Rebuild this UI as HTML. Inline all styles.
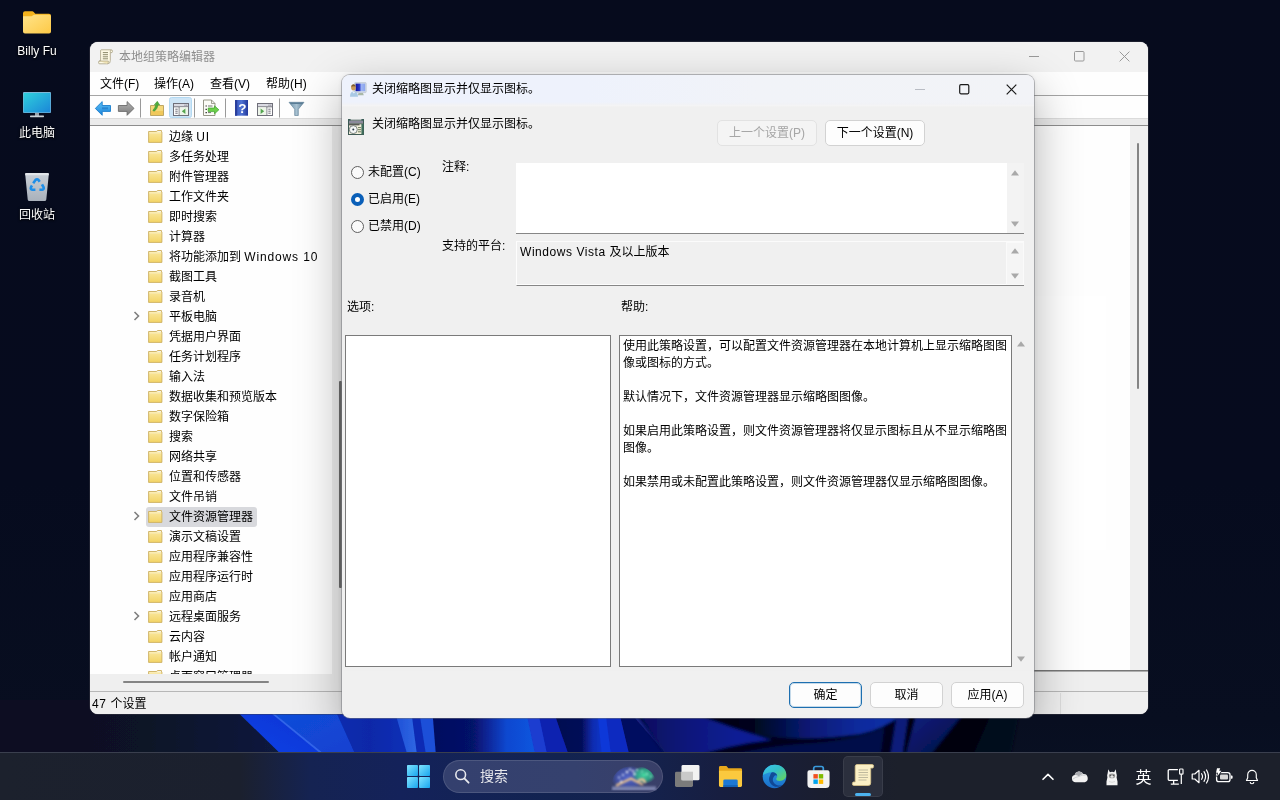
<!DOCTYPE html>
<html lang="zh-CN">
<head>
<meta charset="utf-8">
<title>本地组策略编辑器</title>
<style>
*{box-sizing:border-box;margin:0;padding:0}
html,body{width:1280px;height:800px;overflow:hidden}
body{position:relative;background:#060b18;font-family:"Liberation Sans","Noto Sans CJK SC",sans-serif;font-size:12px;color:#000;line-height:1;font-weight:400}
.abs{position:absolute}
#mmc,#dlg,.dicon,#help,.lbl{will-change:opacity;opacity:.999}
.g2{display:inline-block;will-change:opacity;opacity:.999}
.gs{will-change:opacity;opacity:.999;font-weight:400}
#wall{position:absolute;left:0;top:0;width:1280px;height:800px}
.dicon{position:absolute;font-weight:400;width:74px;text-align:center;color:#fff;font-size:12px;text-shadow:0 1px 2px rgba(0,0,0,.9),0 0 3px rgba(0,0,0,.7)}
/* main window */
#mmc{position:absolute;left:90px;top:42px;width:1058px;height:672px;background:#fff;border-radius:8px;overflow:hidden;box-shadow:0 0 0 1px rgba(60,60,70,.45)}
#mmc .title{position:absolute;left:0;top:0;width:100%;height:30px;background:#f3f3f3}
#mmc .title .t{position:absolute;left:29px;top:8px;font-size:12px;color:#8f8f8f;line-height:14px}
#mmc .menu{position:absolute;left:0;top:30px;width:100%;height:24px;background:#fff;border-bottom:1px solid #a6a6a6}
#mmc .menu span{position:absolute;top:5px;line-height:15px;font-size:12px;color:#000}
#mmc .tool{position:absolute;left:0;top:54px;width:100%;height:23px;background:#fff}
#mmc .band{position:absolute;left:0;top:76px;width:100%;height:8px;background:#ececec;border-top:1px solid #dcdcdc;border-bottom:1px solid #8e8e8e}
#mmc .pane{position:absolute;left:0;top:84px;width:100%;height:565px;background:#fff;overflow:hidden}
#mmc .status{position:absolute;left:0;top:649px;width:100%;height:23px;background:#f0f0f0;border-top:1px solid #b8b8b8}
.sep{position:absolute;top:57px;width:1px;height:19px;background:#a9a9a9}
.row{position:absolute;left:0;height:20px;font-size:12px;line-height:20px;color:#000;white-space:nowrap}
.row .fi{position:absolute;left:58px;top:4px}
.row .tx{position:absolute;left:79px;top:1px}
.row .ch{position:absolute;left:43px;top:5px}
/* dialog */
#dlg{position:absolute;left:342px;top:75px;width:692px;height:643px;background:#f0f0f0;border-radius:8px;overflow:hidden;box-shadow:0 0 0 1px rgba(120,122,128,.5)}
#dlg .cap{position:absolute;left:0;top:0;width:100%;height:32px;background:linear-gradient(180deg,rgba(240,240,240,0) 0,rgba(240,240,240,0) 27px,rgba(241,242,245,.8) 29px,#f4f4f5 30.500px,#f0f0f0 32px),linear-gradient(90deg,#eef2fc 0,#eef2fc 35%,#f1f3f8 60%,#f2f3f7 100%)}
#dlg .in{position:absolute;left:0;top:-1px;width:100%;height:644px}
.btn{position:absolute;height:26px;border:1px solid #d2d2d2;border-radius:5px;background:#fdfdfd;font-size:12px;line-height:24px;text-align:center;color:#000}
.radio{position:absolute;width:13px;height:13px;border-radius:50%;border:1px solid #5f5f5f;background:#fafafa}
.lbl{position:absolute;font-size:12px;line-height:14px;color:#000;white-space:nowrap}
/* taskbar */
#tb{position:absolute;left:0;top:752px;width:1280px;height:48px;background:linear-gradient(90deg,#1c212d 0,#1b202e 240px,#152352 310px,#14225a 400px,#122350 560px,#14224e 640px,#171e40 720px,#1a1e30 820px,#1c202b 900px,#1c202b 1280px);border-top:1px solid #3a3f4e}
</style>
</head>
<body>
<svg id="wall" viewBox="0 0 1280 800" width="1280" height="800">
  <defs>
    <linearGradient id="wbg" x1="0" y1="0" x2="0" y2="1"><stop offset="0" stop-color="#060b1d"/><stop offset=".6" stop-color="#060b1e"/><stop offset=".9" stop-color="#080e20"/><stop offset="1" stop-color="#091124"/></linearGradient>
    <linearGradient id="wp0" gradientUnits="userSpaceOnUse" x1="0" y1="0" x2="280" y2="0"><stop offset="0" stop-color="#080e20"/><stop offset=".5" stop-color="#091226"/><stop offset="1" stop-color="#0b1a3e"/></linearGradient>
    <linearGradient id="wp1" x1="0" y1="1" x2="1" y2="0"><stop offset="0" stop-color="#1244e8"/><stop offset=".5" stop-color="#0c3adc"/><stop offset="1" stop-color="#0a32cc"/></linearGradient>
    <linearGradient id="wp2" x1="0" y1="0" x2="1" y2="1"><stop offset="0" stop-color="#0e52dc"/><stop offset=".6" stop-color="#1246d4"/><stop offset="1" stop-color="#1840d0"/></linearGradient>
    <linearGradient id="wp3" x1="0" y1="0" x2="1" y2="0"><stop offset="0" stop-color="#0a2cb0"/><stop offset=".5" stop-color="#0828a8"/><stop offset="1" stop-color="#0a30b8"/></linearGradient>
    <linearGradient id="wp4" gradientUnits="userSpaceOnUse" x1="434" y1="0" x2="531" y2="0"><stop offset="0" stop-color="#040e60"/><stop offset=".4" stop-color="#061268"/><stop offset=".58" stop-color="#0a2aa0"/><stop offset=".75" stop-color="#0c48d0"/><stop offset="1" stop-color="#1054dc"/></linearGradient>
    <linearGradient id="wp5" gradientUnits="userSpaceOnUse" x1="556" y1="0" x2="602" y2="0"><stop offset="0" stop-color="#040a50"/><stop offset=".55" stop-color="#050c58"/><stop offset=".8" stop-color="#0c2cb0"/><stop offset="1" stop-color="#1034c8"/></linearGradient>
    <linearGradient id="wpa" x1="0" y1="0" x2="1" y2="0"><stop offset="0" stop-color="#1c4cd4"/><stop offset="1" stop-color="#3068e4"/></linearGradient>
    <linearGradient id="wp6" gradientUnits="userSpaceOnUse" x1="636" y1="0" x2="780" y2="0"><stop offset="0" stop-color="#060e5c"/><stop offset=".35" stop-color="#08167a"/><stop offset=".7" stop-color="#0a1e94"/><stop offset="1" stop-color="#0a1e90"/></linearGradient>
    <linearGradient id="wp7" gradientUnits="userSpaceOnUse" x1="690" y1="0" x2="900" y2="0"><stop offset="0" stop-color="#010310"/><stop offset=".3" stop-color="#02061c"/><stop offset=".55" stop-color="#071870"/><stop offset=".8" stop-color="#0c2a9c"/><stop offset="1" stop-color="#0e30a8"/></linearGradient>
    <linearGradient id="wp8" x1="0" y1="0" x2="1" y2="1"><stop offset="0" stop-color="#0a2088"/><stop offset=".6" stop-color="#061458"/><stop offset="1" stop-color="#01040c"/></linearGradient>
    <linearGradient id="wp9" x1="0" y1="0" x2="1" y2="0"><stop offset="0" stop-color="#06165f"/><stop offset="1" stop-color="#01030b"/></linearGradient>
    <filter id="wbl2" filterUnits="userSpaceOnUse" x="600" y="690" width="480" height="80"><feGaussianBlur stdDeviation="1.600"/></filter>
    <filter id="wbl" filterUnits="userSpaceOnUse" x="0" y="690" width="1280" height="80"><feGaussianBlur stdDeviation=".7"/></filter>
  </defs>
  <rect width="1280" height="800" fill="url(#wbg)"/>
  <g filter="url(#wbl)">
    <path d="M0 700H226.0 L285.6 758H0z" fill="url(#wp0)"/>
    <path d="M225.2 700 L284.8 758 L326.7 758 L255.8 700z" fill="url(#wp1)"/>
    <path d="M255.0 700 L325.9 758 L357.6 758 L331.6 700z" fill="url(#wp2)"/>
    <path d="M255.0 700 L325.9 758 L329.0 758 L257.4 700z" fill="#3c6ef0" opacity=".75"/>
    <path d="M330.8 700 L356.8 758 L409.1 758 L392.3 700z" fill="url(#wp3)"/>
    <path d="M391.5 700 L408.3 758 L418.2 758 L410.6 700z" fill="url(#wpa)"/>
    <path d="M409.8 700 L417.4 758 L427.3 758 L418.2 700z" fill="#0c2cb4"/>
    <path d="M417.4 700 L426.5 758 L436.9 758 L432.3 700z" fill="#1c50d8"/>
    <path d="M431.5 700 L436.1 758 L536.7 758 L524.5 700z" fill="url(#wp4)"/>
    <path d="M523.7 700 L535.9 758 L548.7 758 L536.5 700z" fill="#1a3cd0"/>
    <path d="M535.7 700 L547.9 758 L570.5 758 L550.6 700z" fill="#0c20b0"/>
    <path d="M549.8 700 L569.7 758 L603.0 758 L596.9 700z" fill="url(#wp5)"/>
    <path d="M596.1 700 L602.2 758 L612.2 758 L604.6 700z" fill="#1038d8"/>
    <path d="M603.8 700 L611.4 758 L630.8 758 L617.1 700z" fill="#0c2cc0"/>
    <path d="M616.3 700 L630.0 758 L670.6 758 L620.2 700z" fill="#060e60"/>
    <path d="M619.4 700 L669.8 758 L674.6 758 L624.2 700z" fill="#1a2c98" opacity=".8"/>
  </g>
  <g filter="url(#wbl2)">
    <path d="M627 700L667 758H1004V700z" fill="#02051a"/>
    <path d="M628 700L668 758H690Q730 744 772 740Q736 730 700 716L684 700z" fill="url(#wp6)"/>
    <path d="M684 700H902V714Q884 729 860 734Q806 742 758 735Q728 724 692 712z" fill="url(#wp7)"/>
    <path d="M720 758Q760 747 800 744Q850 742 884 728L880 758z" fill="#050f48"/>
    <path d="M897 714L909 712L902 758H890z" fill="#0a1e7a"/>
    <path d="M909 712L918 710L905 758H902z" fill="#01030b"/>
    <path d="M918 708H968L928 758H905z" fill="url(#wp8)"/>
    <path d="M968 708H994L972 758H928z" fill="#01030a"/>
    <path d="M994 708H1020L1010 758H972z" fill="#060c1c"/>
  </g>
  
  
</svg>

<!-- desktop icons -->
<svg class="abs" style="left:22px;top:10px" width="30" height="25" viewBox="0 0 30 25">
  <defs>
    <linearGradient id="fg1" x1="0" y1="0" x2="1" y2="1"><stop offset="0" stop-color="#ffe48a"/><stop offset="1" stop-color="#fdc946"/></linearGradient>
  </defs>
  <path d="M1 3.2a2 2 0 0 1 2-2h7.2a2 2 0 0 1 1.5.7l1.6 1.9H27a2 2 0 0 1 2 2V8H1z" fill="#f4b31c"/>
  <path d="M1 6.3h8.6l2.4-1.6h15a2 2 0 0 1 2 2V21.5a2 2 0 0 1-2 2H3a2 2 0 0 1-2-2z" fill="url(#fg1)"/>
</svg>
<div class="dicon" style="left:0;top:44px;line-height:15px">Billy Fu</div>

<svg class="abs" style="left:22px;top:91px" width="30" height="28" viewBox="0 0 30 28">
  <defs>
    <linearGradient id="pc1" x1="0" y1="0" x2="1" y2="1"><stop offset="0" stop-color="#2fd0dc"/><stop offset="1" stop-color="#1b86d8"/></linearGradient>
  </defs>
  <rect x="1" y="1" width="28" height="21" rx="1" fill="#7fb8d8"/>
  <rect x="1.6" y="2" width="26.8" height="19.4" fill="url(#pc1)"/>
  <rect x="13" y="22" width="4" height="3" fill="#9aa3ab"/>
  <rect x="8" y="24.6" width="14" height="1.6" rx=".6" fill="#c9d1d8"/>
</svg>
<div class="dicon" style="left:0;top:126px;line-height:15px">此电脑</div>

<svg class="abs" style="left:24px;top:172px" width="26" height="30" viewBox="0 0 26 30">
  <defs>
    <linearGradient id="rb1" x1="0" y1="0" x2="0" y2="1"><stop offset="0" stop-color="#c9d0d8"/><stop offset="1" stop-color="#a9b1bb"/></linearGradient>
  </defs>
  <path d="M1.2 2.2Q1 1 2.4 1H23.6Q25 1 24.8 2.2L22.3 27.4Q22.1 29 20.6 29H5.4Q3.9 29 3.7 27.4Z" fill="url(#rb1)"/>
  <path d="M1.2 2.2Q1 1 2.4 1H23.6Q25 1 24.8 2.2L24.7 3.2H1.3Z" fill="#e2e6ea"/>
  <g fill="none" stroke="#1f8fe8" stroke-width="2.6">
    <path d="M9.2 11.2l2.3-3.2q1.5-1.6 3 0l1.2 1.7"/>
    <path d="M18 12.4l1.6 2.9q.7 2-1.4 2.4h-2.8"/>
    <path d="M11.4 17.7H8.3q-2.2-.4-1.3-2.5l1-1.7"/>
  </g>
</svg>
<div class="dicon" style="left:0;top:208px;line-height:15px">回收站</div>

<div id="mmc">
<div class="title">
<svg class="abs" style="left:8px;top:7px" width="16" height="16" viewBox="0 0 16 16"><path d="M3.200 .8H12.800Q14.800 .8 14.500 2.600L14 3.600H12.300V11.500Q12.300 14.800 9.800 14.800H1.800Q.3 14.800 .6 13.300L1 12H2.600V1.800Q2.600 .8 3.200 .8z" fill="#fffbe6" stroke="#a9a184" stroke-width=".8" stroke-linejoin="round"/><path d="M1 12H10.400Q10.600 14 9.300 14.700" fill="#f1e4b4" stroke="#a9a184" stroke-width=".7"/><path d="M12.300 3.500V1.900Q12.400 1 13.300 1" fill="none" stroke="#a9a184" stroke-width=".7"/><path d="M4.800 3.600h5.200M4.800 5.700h5.200M4.800 7.800h5.200M4.800 9.800h5.200" stroke="#8e8a6c" stroke-width="1"/></svg>
<div class="t">本地组策略编辑器</div>
<svg class="abs" style="left:938px;top:8px" width="12" height="12" viewBox="0 0 12 12"><path d="M1 6.5h10" stroke="#9a9a9a" stroke-width="1"/></svg>
<svg class="abs" style="left:984px;top:9px" width="11" height="11" viewBox="0 0 11 11"><rect x=".5" y=".5" width="9.5" height="9.5" rx="1" fill="none" stroke="#9a9a9a" stroke-width="1"/></svg>
<svg class="abs" style="left:1029px;top:9px" width="11" height="11" viewBox="0 0 11 11"><path d="M.6.6l9.800 9.800M10.400.6L.6 10.400" stroke="#9a9a9a" stroke-width="1"/></svg>
</div>
<div class="menu"><span style="left:10px">文件(F)</span><span style="left:64px">操作(A)</span><span style="left:120px">查看(V)</span><span style="left:176px">帮助(H)</span></div>
<div class="tool"></div>
<svg class="abs" style="left:0;top:54px" width="240" height="24" viewBox="90 96 240 24">
  <defs>
    <linearGradient id="tb1" x1="0" y1="0" x2="0" y2="1"><stop offset="0" stop-color="#5cc0f6"/><stop offset="1" stop-color="#1f86dc"/></linearGradient>
    <linearGradient id="tb2" x1="0" y1="0" x2="0" y2="1"><stop offset="0" stop-color="#b3b3b3"/><stop offset="1" stop-color="#7c7c7c"/></linearGradient>
    <linearGradient id="tb3" x1="0" y1="0" x2="1" y2="0"><stop offset="0" stop-color="#3a58c0"/><stop offset=".5" stop-color="#4f73d4"/><stop offset="1" stop-color="#22389c"/></linearGradient>
    <linearGradient id="tb4" x1="0" y1="0" x2="1" y2="0"><stop offset="0" stop-color="#6f93ab"/><stop offset=".5" stop-color="#a9c3d3"/><stop offset="1" stop-color="#5f8098"/></linearGradient>
  </defs>
  <!-- back -->
  <path d="M95.300 108.400L102.200 101.600V105.500H110.500V111.400H102.200V115.300z" fill="url(#tb1)" stroke="#1c7fce" stroke-width=".9" stroke-linejoin="round"/>
  <rect x="102" y="107.300" width="6" height="2" fill="#1a6fc0" opacity=".55"/>
  <!-- forward -->
  <path d="M134 108.400L127.100 101.600V105.500H118.400V111.400H127.100V115.300z" fill="url(#tb2)" stroke="#6c6c6c" stroke-width=".9" stroke-linejoin="round"/>
  <rect x="140" y="98.500" width="1" height="19" fill="#9a9a9a"/>
  <!-- up folder -->
  <path d="M150.500 105.500H163.500V115.500H150.500z" fill="#f6d97c" stroke="#b9a05a" stroke-width=".9"/>
  <path d="M151 111h12v4h-12z" fill="#f1c95c"/>
  <path d="M152.800 110.500Q155 108 156 104.500L154.300 104.800 157.300 101.300 159.700 105 158 104.700Q157.500 109 154.300 111.200z" fill="#4fae3a" stroke="#3b8f2c" stroke-width=".5"/>
  <!-- selected show/hide tree -->
  <rect x="169.500" y="97.500" width="22" height="20" rx="2" fill="#cfe6f7" stroke="#b4daf3" stroke-width="1"/>
  <rect x="173.500" y="103.500" width="15" height="12" fill="#fff" stroke="#70707a" stroke-width="1"/>
  <rect x="174" y="104" width="14" height="2.300" fill="#dcdce4"/>
  <path d="M174 106.800H188" stroke="#70707a" stroke-width="1"/>
  <path d="M184.500 105.200h1M186.300 105.200h1" stroke="#70707a" stroke-width="1"/>
  <path d="M179.200 107V115" stroke="#70707a" stroke-width="1"/>
  <path d="M175.300 109.200h2.400M175.300 111.200h2.400M175.300 113.200h2.400" stroke="#70707a" stroke-width="1"/>
  <rect x="179.700" y="107.300" width="8.300" height="7.700" fill="#eef6ea"/>
  <path d="M185.400 108.600V114l-3.600-2.700z" fill="#55a650"/>
  <rect x="194" y="98.500" width="1" height="19" fill="#9a9a9a"/>
  <!-- export list -->
  <path d="M203.500 100h8l3.500 3.500V115.500h-11.500z" fill="#fdfdf8" stroke="#8c8c7c" stroke-width=".9"/>
  <path d="M211.500 100v3.500h3.500" fill="none" stroke="#8c8c7c" stroke-width=".8"/>
  <path d="M205.500 106h1.400M205.500 109.300h1.400M205.500 112.600h1.400" stroke="#333" stroke-width="1.200"/>
  <path d="M208 106h4.500M208 112.600h3" stroke="#777" stroke-width="1"/>
  <path d="M208.200 108h6.300V105.800L218.900 109.800 214.500 113.800V111.600H208.200z" fill="#6cd04a" stroke="#3fa42c" stroke-width=".7" stroke-linejoin="round"/>
  <rect x="225" y="98.500" width="1" height="19" fill="#9a9a9a"/>
  <!-- help -->
  <rect x="235" y="100" width="13" height="15.700" fill="url(#tb3)"/>
  <rect x="235" y="100" width="2.200" height="15.700" fill="#2a3f9c"/>
  <text x="242.300" y="113.300" text-anchor="middle" font-family="Liberation Sans, sans-serif" font-weight="bold" font-size="13.500" fill="#fff">?</text>
  <!-- show/hide action -->
  <rect x="257.500" y="103.500" width="15" height="12" fill="#fff" stroke="#70707a" stroke-width="1"/>
  <rect x="258" y="104" width="14" height="2.300" fill="#dcdce4"/>
  <path d="M258 106.800H272" stroke="#70707a" stroke-width="1"/>
  <path d="M268.500 105.200h1M270.300 105.200h1" stroke="#70707a" stroke-width="1"/>
  <path d="M266.800 107V115" stroke="#70707a" stroke-width="1"/>
  <rect x="258" y="107.300" width="8.300" height="7.700" fill="#eef6ea"/>
  <path d="M260.600 108.600V114l3.600-2.700z" fill="#55a650"/>
  <path d="M268.300 109.200h2.400M268.300 111.200h2.400M268.300 113.200h2.400" stroke="#70707a" stroke-width="1"/>
  <rect x="279" y="98.500" width="1" height="19" fill="#9a9a9a"/>
  <!-- filter -->
  <path d="M289 102.300H304L298.300 109.200V115.500H294.700V109.200z" fill="url(#tb4)" stroke="#6a8ba0" stroke-width=".7" stroke-linejoin="round"/>
  <path d="M289.500 102.600H303.500L302.500 103.900H290.500z" fill="#5c7f98"/>
</svg>

<div class="band"></div>
<div class="pane">
<div class="row" style="top:0px"><svg class="fi" width="15" height="14" viewBox="0 0 15 14"><defs><linearGradient id="fo" x1="0" y1="0" x2="0" y2="1"><stop offset="0" stop-color="#fbeaa6"/><stop offset="1" stop-color="#f4d566"/></linearGradient></defs><path d="M.6 1.500H8.400L9.600 .5H13.400V2H13.900V12.400H.6z" fill="url(#fo)" stroke="#cdb062" stroke-width=".9" stroke-linejoin="round"/><path d="M9 1.900L9.900 1H13V1.900z" fill="#f6f3e6"/><path d="M1.200 2.900H13.300" stroke="#fdf5d2" stroke-width=".8"/></svg><span class="tx">边缘 <span style="letter-spacing:.8px">UI</span></span></div>
<div class="row" style="top:20px"><svg class="fi" width="15" height="14" viewBox="0 0 15 14"><defs><linearGradient id="fo" x1="0" y1="0" x2="0" y2="1"><stop offset="0" stop-color="#fbeaa6"/><stop offset="1" stop-color="#f4d566"/></linearGradient></defs><path d="M.6 1.500H8.400L9.600 .5H13.400V2H13.900V12.400H.6z" fill="url(#fo)" stroke="#cdb062" stroke-width=".9" stroke-linejoin="round"/><path d="M9 1.900L9.900 1H13V1.900z" fill="#f6f3e6"/><path d="M1.200 2.900H13.300" stroke="#fdf5d2" stroke-width=".8"/></svg><span class="tx">多任务处理</span></div>
<div class="row" style="top:40px"><svg class="fi" width="15" height="14" viewBox="0 0 15 14"><defs><linearGradient id="fo" x1="0" y1="0" x2="0" y2="1"><stop offset="0" stop-color="#fbeaa6"/><stop offset="1" stop-color="#f4d566"/></linearGradient></defs><path d="M.6 1.500H8.400L9.600 .5H13.400V2H13.900V12.400H.6z" fill="url(#fo)" stroke="#cdb062" stroke-width=".9" stroke-linejoin="round"/><path d="M9 1.900L9.900 1H13V1.900z" fill="#f6f3e6"/><path d="M1.200 2.900H13.300" stroke="#fdf5d2" stroke-width=".8"/></svg><span class="tx">附件管理器</span></div>
<div class="row" style="top:60px"><svg class="fi" width="15" height="14" viewBox="0 0 15 14"><defs><linearGradient id="fo" x1="0" y1="0" x2="0" y2="1"><stop offset="0" stop-color="#fbeaa6"/><stop offset="1" stop-color="#f4d566"/></linearGradient></defs><path d="M.6 1.500H8.400L9.600 .5H13.400V2H13.900V12.400H.6z" fill="url(#fo)" stroke="#cdb062" stroke-width=".9" stroke-linejoin="round"/><path d="M9 1.900L9.900 1H13V1.900z" fill="#f6f3e6"/><path d="M1.200 2.900H13.300" stroke="#fdf5d2" stroke-width=".8"/></svg><span class="tx">工作文件夹</span></div>
<div class="row" style="top:80px"><svg class="fi" width="15" height="14" viewBox="0 0 15 14"><defs><linearGradient id="fo" x1="0" y1="0" x2="0" y2="1"><stop offset="0" stop-color="#fbeaa6"/><stop offset="1" stop-color="#f4d566"/></linearGradient></defs><path d="M.6 1.500H8.400L9.600 .5H13.400V2H13.900V12.400H.6z" fill="url(#fo)" stroke="#cdb062" stroke-width=".9" stroke-linejoin="round"/><path d="M9 1.900L9.900 1H13V1.900z" fill="#f6f3e6"/><path d="M1.200 2.900H13.300" stroke="#fdf5d2" stroke-width=".8"/></svg><span class="tx">即时搜索</span></div>
<div class="row" style="top:100px"><svg class="fi" width="15" height="14" viewBox="0 0 15 14"><defs><linearGradient id="fo" x1="0" y1="0" x2="0" y2="1"><stop offset="0" stop-color="#fbeaa6"/><stop offset="1" stop-color="#f4d566"/></linearGradient></defs><path d="M.6 1.500H8.400L9.600 .5H13.400V2H13.900V12.400H.6z" fill="url(#fo)" stroke="#cdb062" stroke-width=".9" stroke-linejoin="round"/><path d="M9 1.900L9.900 1H13V1.900z" fill="#f6f3e6"/><path d="M1.200 2.900H13.300" stroke="#fdf5d2" stroke-width=".8"/></svg><span class="tx">计算器</span></div>
<div class="row" style="top:120px"><svg class="fi" width="15" height="14" viewBox="0 0 15 14"><defs><linearGradient id="fo" x1="0" y1="0" x2="0" y2="1"><stop offset="0" stop-color="#fbeaa6"/><stop offset="1" stop-color="#f4d566"/></linearGradient></defs><path d="M.6 1.500H8.400L9.600 .5H13.400V2H13.900V12.400H.6z" fill="url(#fo)" stroke="#cdb062" stroke-width=".9" stroke-linejoin="round"/><path d="M9 1.900L9.900 1H13V1.900z" fill="#f6f3e6"/><path d="M1.200 2.900H13.300" stroke="#fdf5d2" stroke-width=".8"/></svg><span class="tx">将功能添加到 <span style="letter-spacing:.85px">Windows 10</span></span></div>
<div class="row" style="top:140px"><svg class="fi" width="15" height="14" viewBox="0 0 15 14"><defs><linearGradient id="fo" x1="0" y1="0" x2="0" y2="1"><stop offset="0" stop-color="#fbeaa6"/><stop offset="1" stop-color="#f4d566"/></linearGradient></defs><path d="M.6 1.500H8.400L9.600 .5H13.400V2H13.900V12.400H.6z" fill="url(#fo)" stroke="#cdb062" stroke-width=".9" stroke-linejoin="round"/><path d="M9 1.900L9.900 1H13V1.900z" fill="#f6f3e6"/><path d="M1.200 2.900H13.300" stroke="#fdf5d2" stroke-width=".8"/></svg><span class="tx">截图工具</span></div>
<div class="row" style="top:160px"><svg class="fi" width="15" height="14" viewBox="0 0 15 14"><defs><linearGradient id="fo" x1="0" y1="0" x2="0" y2="1"><stop offset="0" stop-color="#fbeaa6"/><stop offset="1" stop-color="#f4d566"/></linearGradient></defs><path d="M.6 1.500H8.400L9.600 .5H13.400V2H13.900V12.400H.6z" fill="url(#fo)" stroke="#cdb062" stroke-width=".9" stroke-linejoin="round"/><path d="M9 1.900L9.900 1H13V1.900z" fill="#f6f3e6"/><path d="M1.200 2.900H13.300" stroke="#fdf5d2" stroke-width=".8"/></svg><span class="tx">录音机</span></div>
<div class="row" style="top:180px"><svg class="ch" width="8" height="10" viewBox="0 0 8 10"><path d="M1.500 1l4 4-4 4" fill="none" stroke="#808080" stroke-width="1.600"/></svg><svg class="fi" width="15" height="14" viewBox="0 0 15 14"><defs><linearGradient id="fo" x1="0" y1="0" x2="0" y2="1"><stop offset="0" stop-color="#fbeaa6"/><stop offset="1" stop-color="#f4d566"/></linearGradient></defs><path d="M.6 1.500H8.400L9.600 .5H13.400V2H13.900V12.400H.6z" fill="url(#fo)" stroke="#cdb062" stroke-width=".9" stroke-linejoin="round"/><path d="M9 1.900L9.900 1H13V1.900z" fill="#f6f3e6"/><path d="M1.200 2.900H13.300" stroke="#fdf5d2" stroke-width=".8"/></svg><span class="tx">平板电脑</span></div>
<div class="row" style="top:200px"><svg class="fi" width="15" height="14" viewBox="0 0 15 14"><defs><linearGradient id="fo" x1="0" y1="0" x2="0" y2="1"><stop offset="0" stop-color="#fbeaa6"/><stop offset="1" stop-color="#f4d566"/></linearGradient></defs><path d="M.6 1.500H8.400L9.600 .5H13.400V2H13.900V12.400H.6z" fill="url(#fo)" stroke="#cdb062" stroke-width=".9" stroke-linejoin="round"/><path d="M9 1.900L9.900 1H13V1.900z" fill="#f6f3e6"/><path d="M1.200 2.900H13.300" stroke="#fdf5d2" stroke-width=".8"/></svg><span class="tx">凭据用户界面</span></div>
<div class="row" style="top:220px"><svg class="fi" width="15" height="14" viewBox="0 0 15 14"><defs><linearGradient id="fo" x1="0" y1="0" x2="0" y2="1"><stop offset="0" stop-color="#fbeaa6"/><stop offset="1" stop-color="#f4d566"/></linearGradient></defs><path d="M.6 1.500H8.400L9.600 .5H13.400V2H13.900V12.400H.6z" fill="url(#fo)" stroke="#cdb062" stroke-width=".9" stroke-linejoin="round"/><path d="M9 1.900L9.900 1H13V1.900z" fill="#f6f3e6"/><path d="M1.200 2.900H13.300" stroke="#fdf5d2" stroke-width=".8"/></svg><span class="tx">任务计划程序</span></div>
<div class="row" style="top:240px"><svg class="fi" width="15" height="14" viewBox="0 0 15 14"><defs><linearGradient id="fo" x1="0" y1="0" x2="0" y2="1"><stop offset="0" stop-color="#fbeaa6"/><stop offset="1" stop-color="#f4d566"/></linearGradient></defs><path d="M.6 1.500H8.400L9.600 .5H13.400V2H13.900V12.400H.6z" fill="url(#fo)" stroke="#cdb062" stroke-width=".9" stroke-linejoin="round"/><path d="M9 1.900L9.900 1H13V1.900z" fill="#f6f3e6"/><path d="M1.200 2.900H13.300" stroke="#fdf5d2" stroke-width=".8"/></svg><span class="tx">输入法</span></div>
<div class="row" style="top:260px"><svg class="fi" width="15" height="14" viewBox="0 0 15 14"><defs><linearGradient id="fo" x1="0" y1="0" x2="0" y2="1"><stop offset="0" stop-color="#fbeaa6"/><stop offset="1" stop-color="#f4d566"/></linearGradient></defs><path d="M.6 1.500H8.400L9.600 .5H13.400V2H13.900V12.400H.6z" fill="url(#fo)" stroke="#cdb062" stroke-width=".9" stroke-linejoin="round"/><path d="M9 1.900L9.900 1H13V1.900z" fill="#f6f3e6"/><path d="M1.200 2.900H13.300" stroke="#fdf5d2" stroke-width=".8"/></svg><span class="tx">数据收集和预览版本</span></div>
<div class="row" style="top:280px"><svg class="fi" width="15" height="14" viewBox="0 0 15 14"><defs><linearGradient id="fo" x1="0" y1="0" x2="0" y2="1"><stop offset="0" stop-color="#fbeaa6"/><stop offset="1" stop-color="#f4d566"/></linearGradient></defs><path d="M.6 1.500H8.400L9.600 .5H13.400V2H13.900V12.400H.6z" fill="url(#fo)" stroke="#cdb062" stroke-width=".9" stroke-linejoin="round"/><path d="M9 1.900L9.900 1H13V1.900z" fill="#f6f3e6"/><path d="M1.200 2.900H13.300" stroke="#fdf5d2" stroke-width=".8"/></svg><span class="tx">数字保险箱</span></div>
<div class="row" style="top:300px"><svg class="fi" width="15" height="14" viewBox="0 0 15 14"><defs><linearGradient id="fo" x1="0" y1="0" x2="0" y2="1"><stop offset="0" stop-color="#fbeaa6"/><stop offset="1" stop-color="#f4d566"/></linearGradient></defs><path d="M.6 1.500H8.400L9.600 .5H13.400V2H13.900V12.400H.6z" fill="url(#fo)" stroke="#cdb062" stroke-width=".9" stroke-linejoin="round"/><path d="M9 1.900L9.900 1H13V1.900z" fill="#f6f3e6"/><path d="M1.200 2.900H13.300" stroke="#fdf5d2" stroke-width=".8"/></svg><span class="tx">搜索</span></div>
<div class="row" style="top:320px"><svg class="fi" width="15" height="14" viewBox="0 0 15 14"><defs><linearGradient id="fo" x1="0" y1="0" x2="0" y2="1"><stop offset="0" stop-color="#fbeaa6"/><stop offset="1" stop-color="#f4d566"/></linearGradient></defs><path d="M.6 1.500H8.400L9.600 .5H13.400V2H13.900V12.400H.6z" fill="url(#fo)" stroke="#cdb062" stroke-width=".9" stroke-linejoin="round"/><path d="M9 1.900L9.900 1H13V1.900z" fill="#f6f3e6"/><path d="M1.200 2.900H13.300" stroke="#fdf5d2" stroke-width=".8"/></svg><span class="tx">网络共享</span></div>
<div class="row" style="top:340px"><svg class="fi" width="15" height="14" viewBox="0 0 15 14"><defs><linearGradient id="fo" x1="0" y1="0" x2="0" y2="1"><stop offset="0" stop-color="#fbeaa6"/><stop offset="1" stop-color="#f4d566"/></linearGradient></defs><path d="M.6 1.500H8.400L9.600 .5H13.400V2H13.900V12.400H.6z" fill="url(#fo)" stroke="#cdb062" stroke-width=".9" stroke-linejoin="round"/><path d="M9 1.900L9.900 1H13V1.900z" fill="#f6f3e6"/><path d="M1.200 2.900H13.300" stroke="#fdf5d2" stroke-width=".8"/></svg><span class="tx">位置和传感器</span></div>
<div class="row" style="top:360px"><svg class="fi" width="15" height="14" viewBox="0 0 15 14"><defs><linearGradient id="fo" x1="0" y1="0" x2="0" y2="1"><stop offset="0" stop-color="#fbeaa6"/><stop offset="1" stop-color="#f4d566"/></linearGradient></defs><path d="M.6 1.500H8.400L9.600 .5H13.400V2H13.900V12.400H.6z" fill="url(#fo)" stroke="#cdb062" stroke-width=".9" stroke-linejoin="round"/><path d="M9 1.900L9.900 1H13V1.900z" fill="#f6f3e6"/><path d="M1.200 2.900H13.300" stroke="#fdf5d2" stroke-width=".8"/></svg><span class="tx">文件吊销</span></div>
<div class="row" style="top:380px"><div class="abs" style="left:56px;top:1px;width:111px;height:20px;background:#d9dade;border-radius:3px"></div><svg class="ch" width="8" height="10" viewBox="0 0 8 10"><path d="M1.500 1l4 4-4 4" fill="none" stroke="#808080" stroke-width="1.600"/></svg><svg class="fi" width="15" height="14" viewBox="0 0 15 14"><defs><linearGradient id="fo" x1="0" y1="0" x2="0" y2="1"><stop offset="0" stop-color="#fbeaa6"/><stop offset="1" stop-color="#f4d566"/></linearGradient></defs><path d="M.6 1.500H8.400L9.600 .5H13.400V2H13.900V12.400H.6z" fill="url(#fo)" stroke="#cdb062" stroke-width=".9" stroke-linejoin="round"/><path d="M9 1.900L9.900 1H13V1.900z" fill="#f6f3e6"/><path d="M1.200 2.900H13.300" stroke="#fdf5d2" stroke-width=".8"/></svg><span class="tx">文件资源管理器</span></div>
<div class="row" style="top:400px"><svg class="fi" width="15" height="14" viewBox="0 0 15 14"><defs><linearGradient id="fo" x1="0" y1="0" x2="0" y2="1"><stop offset="0" stop-color="#fbeaa6"/><stop offset="1" stop-color="#f4d566"/></linearGradient></defs><path d="M.6 1.500H8.400L9.600 .5H13.400V2H13.900V12.400H.6z" fill="url(#fo)" stroke="#cdb062" stroke-width=".9" stroke-linejoin="round"/><path d="M9 1.900L9.900 1H13V1.900z" fill="#f6f3e6"/><path d="M1.200 2.900H13.300" stroke="#fdf5d2" stroke-width=".8"/></svg><span class="tx">演示文稿设置</span></div>
<div class="row" style="top:420px"><svg class="fi" width="15" height="14" viewBox="0 0 15 14"><defs><linearGradient id="fo" x1="0" y1="0" x2="0" y2="1"><stop offset="0" stop-color="#fbeaa6"/><stop offset="1" stop-color="#f4d566"/></linearGradient></defs><path d="M.6 1.500H8.400L9.600 .5H13.400V2H13.900V12.400H.6z" fill="url(#fo)" stroke="#cdb062" stroke-width=".9" stroke-linejoin="round"/><path d="M9 1.900L9.900 1H13V1.900z" fill="#f6f3e6"/><path d="M1.200 2.900H13.300" stroke="#fdf5d2" stroke-width=".8"/></svg><span class="tx">应用程序兼容性</span></div>
<div class="row" style="top:440px"><svg class="fi" width="15" height="14" viewBox="0 0 15 14"><defs><linearGradient id="fo" x1="0" y1="0" x2="0" y2="1"><stop offset="0" stop-color="#fbeaa6"/><stop offset="1" stop-color="#f4d566"/></linearGradient></defs><path d="M.6 1.500H8.400L9.600 .5H13.400V2H13.900V12.400H.6z" fill="url(#fo)" stroke="#cdb062" stroke-width=".9" stroke-linejoin="round"/><path d="M9 1.900L9.900 1H13V1.900z" fill="#f6f3e6"/><path d="M1.200 2.900H13.300" stroke="#fdf5d2" stroke-width=".8"/></svg><span class="tx">应用程序运行时</span></div>
<div class="row" style="top:460px"><svg class="fi" width="15" height="14" viewBox="0 0 15 14"><defs><linearGradient id="fo" x1="0" y1="0" x2="0" y2="1"><stop offset="0" stop-color="#fbeaa6"/><stop offset="1" stop-color="#f4d566"/></linearGradient></defs><path d="M.6 1.500H8.400L9.600 .5H13.400V2H13.900V12.400H.6z" fill="url(#fo)" stroke="#cdb062" stroke-width=".9" stroke-linejoin="round"/><path d="M9 1.900L9.900 1H13V1.900z" fill="#f6f3e6"/><path d="M1.200 2.900H13.300" stroke="#fdf5d2" stroke-width=".8"/></svg><span class="tx">应用商店</span></div>
<div class="row" style="top:480px"><svg class="ch" width="8" height="10" viewBox="0 0 8 10"><path d="M1.500 1l4 4-4 4" fill="none" stroke="#808080" stroke-width="1.600"/></svg><svg class="fi" width="15" height="14" viewBox="0 0 15 14"><defs><linearGradient id="fo" x1="0" y1="0" x2="0" y2="1"><stop offset="0" stop-color="#fbeaa6"/><stop offset="1" stop-color="#f4d566"/></linearGradient></defs><path d="M.6 1.500H8.400L9.600 .5H13.400V2H13.900V12.400H.6z" fill="url(#fo)" stroke="#cdb062" stroke-width=".9" stroke-linejoin="round"/><path d="M9 1.900L9.900 1H13V1.900z" fill="#f6f3e6"/><path d="M1.200 2.900H13.300" stroke="#fdf5d2" stroke-width=".8"/></svg><span class="tx">远程桌面服务</span></div>
<div class="row" style="top:500px"><svg class="fi" width="15" height="14" viewBox="0 0 15 14"><defs><linearGradient id="fo" x1="0" y1="0" x2="0" y2="1"><stop offset="0" stop-color="#fbeaa6"/><stop offset="1" stop-color="#f4d566"/></linearGradient></defs><path d="M.6 1.500H8.400L9.600 .5H13.400V2H13.900V12.400H.6z" fill="url(#fo)" stroke="#cdb062" stroke-width=".9" stroke-linejoin="round"/><path d="M9 1.900L9.900 1H13V1.900z" fill="#f6f3e6"/><path d="M1.200 2.900H13.300" stroke="#fdf5d2" stroke-width=".8"/></svg><span class="tx">云内容</span></div>
<div class="row" style="top:520px"><svg class="fi" width="15" height="14" viewBox="0 0 15 14"><defs><linearGradient id="fo" x1="0" y1="0" x2="0" y2="1"><stop offset="0" stop-color="#fbeaa6"/><stop offset="1" stop-color="#f4d566"/></linearGradient></defs><path d="M.6 1.500H8.400L9.600 .5H13.400V2H13.900V12.400H.6z" fill="url(#fo)" stroke="#cdb062" stroke-width=".9" stroke-linejoin="round"/><path d="M9 1.900L9.900 1H13V1.900z" fill="#f6f3e6"/><path d="M1.200 2.900H13.300" stroke="#fdf5d2" stroke-width=".8"/></svg><span class="tx">帐户通知</span></div>
<div class="row" style="top:540px"><svg class="fi" width="15" height="14" viewBox="0 0 15 14"><defs><linearGradient id="fo" x1="0" y1="0" x2="0" y2="1"><stop offset="0" stop-color="#fbeaa6"/><stop offset="1" stop-color="#f4d566"/></linearGradient></defs><path d="M.6 1.500H8.400L9.600 .5H13.400V2H13.900V12.400H.6z" fill="url(#fo)" stroke="#cdb062" stroke-width=".9" stroke-linejoin="round"/><path d="M9 1.900L9.900 1H13V1.900z" fill="#f6f3e6"/><path d="M1.200 2.900H13.300" stroke="#fdf5d2" stroke-width=".8"/></svg><span class="tx">桌面窗口管理器</span></div>
<div class="abs" style="left:242px;top:0;width:17px;height:548px;background:#f0f0f0"></div>
<div class="abs" style="left:249px;top:255px;width:3px;height:207px;background:#707070;border-radius:1px"></div>
<div class="abs" style="left:1040px;top:0;width:18px;height:545px;background:#f1f1f1"></div>
<div class="abs" style="left:1047px;top:17px;width:2px;height:246px;background:#858585;border-radius:1px"></div>
<div class="abs" style="left:0;top:548px;width:254px;height:19px;background:#f0f0f0"></div>
<div class="abs" style="left:254px;top:544px;width:804px;height:22px;background:#f0f0f0;border-top:1px solid #787878;box-shadow:inset 0 1px 0 #b0b0b0"></div>
<div class="abs" style="left:33px;top:555px;width:146px;height:2px;background:#858585;border-radius:1px"></div>
</div>
<div class="status"><div class="abs" style="left:2px;top:5px;line-height:15px;font-size:12px;color:#000"><span style="letter-spacing:.6px">47 </span>个设置</div><div class="abs" style="left:970px;top:1px;width:1px;height:22px;background:#dcdcdc"></div></div>
</div>

<div class="abs" style="left:90px;top:42px;width:1058px;height:672px;border-radius:8px;overflow:hidden"><div id="dlgshadow" class="abs" style="left:252px;top:33px;width:692px;height:643px;border-radius:8px;box-shadow:0 16px 46px 2px rgba(0,0,0,.29),0 0 6px 0 rgba(0,0,0,.09)"></div></div>
<div id="dlg">
 <div class="in">
  <div class="cap" style="top:1px">
    <svg class="abs" style="left:8px;top:7px" width="17" height="16" viewBox="0 0 17 16">
      <defs><linearGradient id="ms" x1="0" y1="0" x2="1" y2="0"><stop offset="0" stop-color="#10109c"/><stop offset=".4" stop-color="#2a38c8"/><stop offset=".6" stop-color="#9db4f4"/><stop offset="1" stop-color="#8aa4ee"/></linearGradient></defs>
      <rect x="4.600" y=".6" width="11.600" height="10" rx=".8" fill="#d4dce6" stroke="#b4bcc8" stroke-width=".6"/>
      <rect x="5.600" y="1.600" width="9.600" height="7.600" fill="url(#ms)"/>
      <path d="M8.500 11h4.500l.8 2.200H7.800z" fill="#a9b8a8"/>
      <ellipse cx="3.400" cy="5.600" rx="2.300" ry="3" fill="#c99a58"/>
      <path d="M1.200 4.800Q1.400 2.200 3.600 2.300Q5.600 2.400 5.700 4.600Q3.600 3.600 1.200 4.800z" fill="#7a5a30"/>
      <path d="M0 14.700Q0 9.600 3.800 9.600Q7.800 9.600 8 14.700z" fill="#a9c9e4"/>
      <path d="M2.400 9.900L3.800 11.600 5.300 9.900" fill="#e8f0f8"/>
    </svg>
    <div class="lbl" style="left:30px;top:7px">关闭缩略图显示并仅显示图标。</div>
    <svg class="abs" style="left:572px;top:9px" width="12" height="12" viewBox="0 0 12 12"><path d="M1 5.500h10" stroke="#b9bcc4" stroke-width="1"/></svg>
    <svg class="abs" style="left:617px;top:9px" width="11" height="11" viewBox="0 0 11 11"><rect x=".7" y=".7" width="9.100" height="9.100" rx="1.200" fill="none" stroke="#1a1a1a" stroke-width="1.200"/></svg>
    <svg class="abs" style="left:664px;top:9px" width="11" height="11" viewBox="0 0 11 11"><path d="M.7.7l9.600 9.600M10.300.7L.7 10.300" stroke="#1a1a1a" stroke-width="1.200"/></svg>
  </div>
  <!-- header row -->
  <svg class="abs" style="left:6px;top:45px" width="16" height="16" viewBox="0 0 16 16">
    <rect x=".5" y="1.200" width="15" height="14.300" fill="#f3f0dc" stroke="#3f5a54" stroke-width="1"/>
    <rect x="0" y="0" width="2.600" height="2.400" fill="#3a5c56"/><rect x="13.400" y="0" width="2.600" height="2.400" fill="#3a5c56"/>
    <rect x="1" y="1.700" width="14" height="2.600" fill="#8c8a9c"/>
    <rect x="1" y="4.300" width="14" height="1" fill="#4a5a56"/>
    <rect x="1" y="5.300" width="10.500" height="1" fill="#2e2e2e"/>
    <rect x="13.400" y="5" width="2.100" height="10.500" fill="#3f6e5c"/>
    <circle cx="5.300" cy="10.600" r="4" fill="#f4f6f6" stroke="#5a6662" stroke-width=".8"/>
    <circle cx="5.300" cy="10.600" r="1" fill="#2a3a48"/>
    <path d="M10 8.600h3M10 10.700h3M10 12.800h3" stroke="#6a7a5c" stroke-width="1"/>
  </svg>
  <div class="lbl" style="left:30px;top:43px">关闭缩略图显示并仅显示图标。</div>
  <div class="btn" style="left:375px;top:46px;width:100px;color:#a6a6a6;background:#f4f4f4;border-color:#e2e2e2"><span class="g2">上一个设置(P)</span></div>
  <div class="btn" style="left:483px;top:46px;width:100px"><span class="g2">下一个设置(N)</span></div>

  <!-- radios -->
  <div class="radio" style="left:9px;top:92px"></div>
  <div class="lbl" style="left:26px;top:91px">未配置(C)</div>
  <div class="radio" style="left:9px;top:119px;background:#fff;border:4px solid #0a5fb8"></div>
  <div class="lbl" style="left:26px;top:118px">已启用(E)</div>
  <div class="radio" style="left:9px;top:146px"></div>
  <div class="lbl" style="left:26px;top:145px">已禁用(D)</div>

  <div class="lbl" style="left:100px;top:86px">注释:</div>
  <div class="abs" style="left:174px;top:89px;width:508px;height:71px;background:#fff;border-bottom:1px solid #868686"></div>
  <div class="abs" style="left:665px;top:89px;width:17px;height:70px;background:#f3f3f3"></div>
  <svg class="abs" style="left:668px;top:95px" width="10" height="8" viewBox="0 0 10 8"><path d="M5 1.200l4 5.300H1z" fill="#a9a9a9"/></svg>
  <svg class="abs" style="left:668px;top:146px" width="10" height="8" viewBox="0 0 10 8"><path d="M5 6.800l4-5.300H1z" fill="#a9a9a9"/></svg>

  <div class="lbl" style="left:100px;top:165px">支持的平台:</div>
  <div class="abs" style="left:174px;top:167px;width:508px;height:45px;background:#f0f0f0;border-top:1px solid #fbfbfb;border-left:1px solid #fdfdfd;border-bottom:1px solid #868686;box-shadow:inset 0 -1px 0 #fdfdfd"></div>
  <div class="abs" style="left:664px;top:168px;width:18px;height:43px;background:#f5f5f5;box-shadow:inset 0 0 0 1px #fafafa"></div>
  <div class="lbl" style="left:178px;top:171px"><span style="letter-spacing:.55px">Windows Vista </span>及以上版本</div>
  <svg class="abs" style="left:668px;top:173px" width="10" height="8" viewBox="0 0 10 8"><path d="M5 1.200l4 5.300H1z" fill="#a9a9a9"/></svg>
  <svg class="abs" style="left:668px;top:198px" width="10" height="8" viewBox="0 0 10 8"><path d="M5 6.800l4-5.300H1z" fill="#a9a9a9"/></svg>

  <div class="lbl" style="left:5px;top:226px">选项:</div>
  <div class="lbl" style="left:279px;top:226px">帮助:</div>
  <div class="abs" style="left:3px;top:261px;width:266px;height:332px;background:#fff;border:1px solid #7a7a7a"></div>
  <div class="abs" style="left:277px;top:261px;width:393px;height:332px;background:#fff;border:1px solid #7a7a7a"></div>
  <div class="abs" id="help" style="left:281px;top:264px;width:388px;font-size:12px;line-height:17px;color:#000;letter-spacing:0">
    <div style="white-space:nowrap">使用此策略设置，可以配置文件资源管理器在本地计算机上显示缩略图图</div>
    <div>像或图标的方式。</div>
    <div>&nbsp;</div>
    <div>默认情况下，文件资源管理器显示缩略图图像。</div>
    <div>&nbsp;</div>
    <div style="white-space:nowrap">如果启用此策略设置，则文件资源管理器将仅显示图标且从不显示缩略图</div>
    <div>图像。</div>
    <div>&nbsp;</div>
    <div style="white-space:nowrap">如果禁用或未配置此策略设置，则文件资源管理器仅显示缩略图图像。</div>
  </div>
  <svg class="abs" style="left:674px;top:266px" width="10" height="8" viewBox="0 0 10 8"><path d="M5 1.200l4 5.300H1z" fill="#a9a9a9"/></svg>
  <svg class="abs" style="left:674px;top:581px" width="10" height="8" viewBox="0 0 10 8"><path d="M5 6.800l4-5.300H1z" fill="#a9a9a9"/></svg>

  <div class="btn" style="left:447px;top:608px;width:73px;border-color:#1d6fb0;box-shadow:inset 0 0 0 1px rgba(29,111,176,.25)"><span class="g2">确定</span></div>
  <div class="btn" style="left:528px;top:608px;width:73px"><span class="g2">取消</span></div>
  <div class="btn" style="left:609px;top:608px;width:73px"><span class="g2">应用(A)</span></div>
</div>
</div>

<div id="tb">
  <!-- start -->
  <svg class="abs" style="left:407px;top:12px" width="23" height="23" viewBox="0 0 23.700 23.700">
    <defs><linearGradient id="wl" x1="0" y1="0" x2="1" y2="1"><stop offset="0" stop-color="#7fe3ff"/><stop offset="1" stop-color="#18a5ee"/></linearGradient></defs>
    <rect x="0" y="0" width="11.300" height="11.300" rx=".8" fill="url(#wl)"/>
    <rect x="12.400" y="0" width="11.300" height="11.300" rx=".8" fill="url(#wl)"/>
    <rect x="0" y="12.400" width="11.300" height="11.300" rx=".8" fill="url(#wl)"/>
    <rect x="12.400" y="12.400" width="11.300" height="11.300" rx=".8" fill="url(#wl)"/>
  </svg>
  <!-- search -->
  <div class="abs" style="left:443px;top:7px;width:220px;height:33px;border-radius:17px;background:linear-gradient(90deg,#34406e,#35416e 60%,#393f68);box-shadow:inset 0 0 0 1px rgba(255,255,255,.12)"></div>
  <svg class="abs" style="left:454px;top:15px" width="16.500" height="16.500" viewBox="0 0 18 18"><circle cx="7.300" cy="7.300" r="5.300" fill="none" stroke="#e8e9ee" stroke-width="1.700"/><path d="M11.300 11.400l4.600 4.600" stroke="#e8e9ee" stroke-width="2" stroke-linecap="round"/></svg>
  <div class="abs gs" style="left:480px;top:15px;font-size:14px;line-height:16px;color:#e6e7ec">搜索</div>
  <svg class="abs" style="left:610px;top:12px" width="50" height="27" viewBox="610 764 50 27">
    <defs>
      <radialGradient id="sh1" cx=".5" cy=".5" r=".5"><stop offset="0" stop-color="#5266cc"/><stop offset=".7" stop-color="#4252a8" stop-opacity=".85"/><stop offset="1" stop-color="#3c4a9c" stop-opacity="0"/></radialGradient>
      <radialGradient id="sh2" cx=".5" cy=".5" r=".5"><stop offset="0" stop-color="#46d6a0"/><stop offset=".6" stop-color="#2fae88" stop-opacity=".85"/><stop offset="1" stop-color="#2fae88" stop-opacity="0"/></radialGradient>
      <filter id="shb" filterUnits="userSpaceOnUse" x="600" y="756" width="70" height="44"><feGaussianBlur stdDeviation=".9"/></filter>
      <clipPath id="shc"><path d="M611 789.500Q611 765 634 765Q657 765 657 789.500z"/></clipPath>
    </defs>
    <g clip-path="url(#shc)">
      <ellipse cx="628" cy="777" rx="17" ry="13" fill="url(#sh1)"/>
      <ellipse cx="644" cy="774" rx="12" ry="9" fill="url(#sh2)"/>
      <g filter="url(#shb)">
        <path d="M617 784Q624 781 631 777.500Q637 781 642 783" fill="none" stroke="#e8c08c" stroke-width="2.400" stroke-linecap="round"/>
        <path d="M639 779Q643 777 645 781" fill="none" stroke="#f2c49a" stroke-width="2.400" stroke-linecap="round"/>
        <circle cx="627" cy="771" r="1.200" fill="#fff"/><circle cx="630" cy="768.500" r="1" fill="#fff"/><circle cx="637" cy="769" r="1" fill="#d8fff0"/><circle cx="633" cy="770" r="1.100" fill="#fff"/><circle cx="623" cy="774" r="1" fill="#e8eeff"/><circle cx="634.500" cy="773" r="1.200" fill="#fff"/><circle cx="619" cy="776.500" r="1" fill="#dfe6ff"/><circle cx="621" cy="780.500" r="1" fill="#fff"/>
        <circle cx="647" cy="773" r="1" fill="#9ff0d0"/><circle cx="651" cy="775.500" r="1" fill="#8fe8c8"/><circle cx="642" cy="770.500" r=".9" fill="#8fe8c8"/>
        <rect x="612" y="785.500" width="44" height="4" fill="#7f86b0"/>
      </g>
    </g>
  </svg>
  <!-- task view -->
  <svg class="abs" style="left:675px;top:12px" width="25" height="23" viewBox="0 0 25 24" preserveAspectRatio="none">
    <rect x="0" y="7" width="18" height="16" rx="1.500" fill="#7b7b7b"/>
    <rect x="6.500" y="0" width="18" height="16" rx="1.500" fill="#f2f2f2"/>
    <rect x="6.500" y="7" width="11.500" height="9" fill="#c9c9c9"/>
  </svg>
  <!-- explorer -->
  <svg class="abs" style="left:718px;top:12px" width="25" height="23" viewBox="0 0 26 24" preserveAspectRatio="none">
    <path d="M1 2.500a1.500 1.500 0 0 1 1.500-1.500h6.300l2 2.400H23.500a1.500 1.500 0 0 1 1.500 1.500V8H1z" fill="#e8a81c"/>
    <path d="M1 6h24v15.500a1.500 1.500 0 0 1-1.500 1.500h-21a1.500 1.500 0 0 1-1.500-1.500z" fill="#fbc93e"/>
    <path d="M5.500 16.500a1.500 1.500 0 0 1 1.500-1.500h12a1.500 1.500 0 0 1 1.500 1.500V23h-15z" fill="#1c78d4"/>
    <rect x="5.500" y="21" width="15" height="2" fill="#1464b8"/>
  </svg>
  <!-- edge -->
  <svg class="abs" style="left:762px;top:11px" width="25" height="25" viewBox="0 0 26 26">
    <defs>
      <linearGradient id="eg1" x1="0" y1="0" x2="1" y2="1"><stop offset="0" stop-color="#3cc4f0"/><stop offset=".45" stop-color="#34c0c8"/><stop offset="1" stop-color="#6cd650"/></linearGradient>
      <linearGradient id="eg2" x1="0" y1="0" x2="0" y2="1"><stop offset="0" stop-color="#2aa6e8"/><stop offset="1" stop-color="#1a6cc8"/></linearGradient>
    </defs>
    <circle cx="13" cy="13" r="12.300" fill="url(#eg2)"/>
    <path d="M1 11.500C2.500 4 8 .7 13.500.7c7 0 12 5 11.800 10.600-.2 4.200-3.400 6.400-7 6.400-2.200 0-3.500-.8-3.500-2 0-.9 1-1.400 1-2.900 0-2.300-2.300-4.300-5.600-4.300-4 0-6.900 1.600-9.200 3z" fill="url(#eg1)"/>
    <path d="M8.300 12.200c-2 3-.9 7.900 3.200 10.300 3.200 1.900 7.300 1.500 9.900-.3-4.200.9-8.200-.8-9.600-3.600-.9-1.800-.7-3.800.5-5.400 1.200-1.600 3-1.900 3.500-.4.200-2.300-2-4.200-5.400-4.100-1 .6-1.500 2-2.100 3.500z" fill="#0e3f8c" opacity=".85"/>
  </svg>
  <!-- store -->
  <svg class="abs" style="left:806px;top:11px" width="25" height="25" viewBox="0 0 25 26">
    <path d="M7.500 7V4.600a2 2 0 0 1 2-2h6a2 2 0 0 1 2 2V7" fill="none" stroke="#3a9bdc" stroke-width="1.800"/>
    <path d="M1 8.500a2 2 0 0 1 2-2h19a2 2 0 0 1 2 2V21a4 4 0 0 1-4 4H5a4 4 0 0 1-4-4z" fill="#f3f3f3"/>
    <rect x="7.200" y="10.500" width="4.600" height="4.600" fill="#f25022"/>
    <rect x="12.800" y="10.500" width="4.600" height="4.600" fill="#7fba00"/>
    <rect x="7.200" y="16.100" width="4.600" height="4.600" fill="#00a4ef"/>
    <rect x="12.800" y="16.100" width="4.600" height="4.600" fill="#ffb900"/>
  </svg>
  <!-- gpedit active -->
  <div class="abs" style="left:843px;top:3px;width:40px;height:41px;border-radius:5px;background:#2b2f3d;box-shadow:inset 0 0 0 1px rgba(255,255,255,.07)"></div>
  <svg class="abs" style="left:851px;top:10px" width="24" height="24" viewBox="0 0 24 24">
    <path d="M6 1.500h15q2 0 1.600 2l-.6 1.500h-2.300V20q0 2.500-2.500 2.500H3q-2 0-1.600-2l.6-1.500h2.200V3.500q0-2 1.800-2z" fill="#fbf0c6" stroke="#d9c48a" stroke-width=".8"/>
    <path d="M7.500 7h9.500M7.500 9.500h9.500M7.500 12h9.500M7.500 14.500h9.500M7.500 17h8" stroke="#b9b39a" stroke-width=".9"/>
  </svg>
  <div class="abs" style="left:855px;top:40px;width:16px;height:3px;border-radius:1.500px;background:#4cb3f0"></div>
  <!-- tray -->
  <svg class="abs" style="left:1041px;top:19px" width="14" height="10" viewBox="0 0 14 10"><path d="M2 7.300L7 2.400 12 7.300" fill="none" stroke="#fff" stroke-width="1.600" stroke-linecap="round" stroke-linejoin="round"/></svg>
  <svg class="abs" style="left:1071px;top:17px" width="18" height="13" viewBox="0 0 18 13"><path d="M4.600 12.200a3.600 3.600 0 0 1-.9-7.100A4.600 4.600 0 0 1 12.300 4a4.200 4.200 0 0 1 1.500 8.200z" fill="#f1f1f1"/><path d="M3.700 5.100A4.600 4.600 0 0 1 12.300 4q-2.600.3-4.400 2.400Q6 5 3.700 5.100z" fill="#a9abb0"/><path d="M1.200 9.500q3.200-2.600 6.800-3 3-2 6.600-1.300" fill="none" stroke="#c4c6ca" stroke-width=".8"/></svg>
  <svg class="abs" style="left:1106px;top:16px" width="12" height="17" viewBox="0 0 12 17"><path d="M2.300 0.300L3.900 3.200Q6 2.500 8.100 3.200L9.700 0.300 10.400 4.600Q11.200 6.300 10.600 8.600L11.500 12.500V16.300H0.500V12.500L1.400 8.600Q0.800 6.300 1.600 4.600z" fill="#f4f4f4"/><ellipse cx="6" cy="6.900" rx="3.200" ry="2.300" fill="#9a9a9a"/><ellipse cx="6" cy="7.700" rx="1.500" ry="1.100" fill="#e8e8e8"/><circle cx="4.300" cy="6.300" r=".6" fill="#444"/><circle cx="7.700" cy="6.300" r=".6" fill="#444"/><path d="M3 12.500q3 1.600 6 0" fill="none" stroke="#d0d0d0" stroke-width=".8"/></svg>
  <div class="abs gs" style="left:1135px;top:16px;width:17px;font-size:16px;line-height:17px;color:#fff;text-align:center">英</div>
  <svg class="abs" style="left:1167px;top:15px" width="18" height="18" viewBox="0 0 19 19"><path d="M11.500 1.800H2.300a1 1 0 0 0-1 1V12a1 1 0 0 0 1 1h9.200M7 13v3.800M4 17h8.500" fill="none" stroke="#fff" stroke-width="1.400"/><rect x="13.300" y="1" width="3.600" height="5.500" rx=".8" fill="none" stroke="#fff" stroke-width="1.200"/><path d="M15.100 6.500V17" stroke="#fff" stroke-width="1.300"/></svg>
  <svg class="abs" style="left:1191px;top:15px" width="18" height="17" viewBox="0 0 18 17"><path d="M1.200 6h2.600L8 2.300v12.400L3.800 11H1.200z" fill="none" stroke="#fff" stroke-width="1.200" stroke-linejoin="round"/><path d="M10.600 5.700q1.800 2.800 0 5.600M13 3.700q3.200 4.800 0 9.600M15.500 2q4 6.500 0 13" fill="none" stroke="#fff" stroke-width="1.200" stroke-linecap="round"/></svg>
  <svg class="abs" style="left:1214px;top:14px" width="20" height="18" viewBox="0 0 20 18"><rect x="2.600" y="5.600" width="13.400" height="9" rx="2.200" fill="none" stroke="#fff" stroke-width="1.300"/><rect x="6" y="7.600" width="8" height="5" rx="1" fill="#d8d8d8"/><path d="M17 8.400h.8a.8.800 0 0 1 .8.800v1.800a.8.800 0 0 1-.8.800H17z" fill="#fff"/><path d="M3 1.200H6.200L5.200 3.800H7.400L3.200 9.400 4 5.800H2z" fill="#fff" stroke="#1c202b" stroke-width="1.600" stroke-linejoin="round" paint-order="stroke"/></svg>
  <svg class="abs" style="left:1245px;top:16px" width="14" height="16" viewBox="0 0 17 19"><path d="M8.500 1.500a5.200 5.200 0 0 1 5.200 5.200v3.800l1.500 3.200H1.800l1.500-3.200V6.700A5.200 5.200 0 0 1 8.500 1.500z" fill="none" stroke="#fff" stroke-width="1.400" stroke-linejoin="round"/><path d="M6.300 15.500a2.200 2.200 0 0 0 4.400 0" fill="none" stroke="#fff" stroke-width="1.400"/></svg>
</div>

</body>
</html>
